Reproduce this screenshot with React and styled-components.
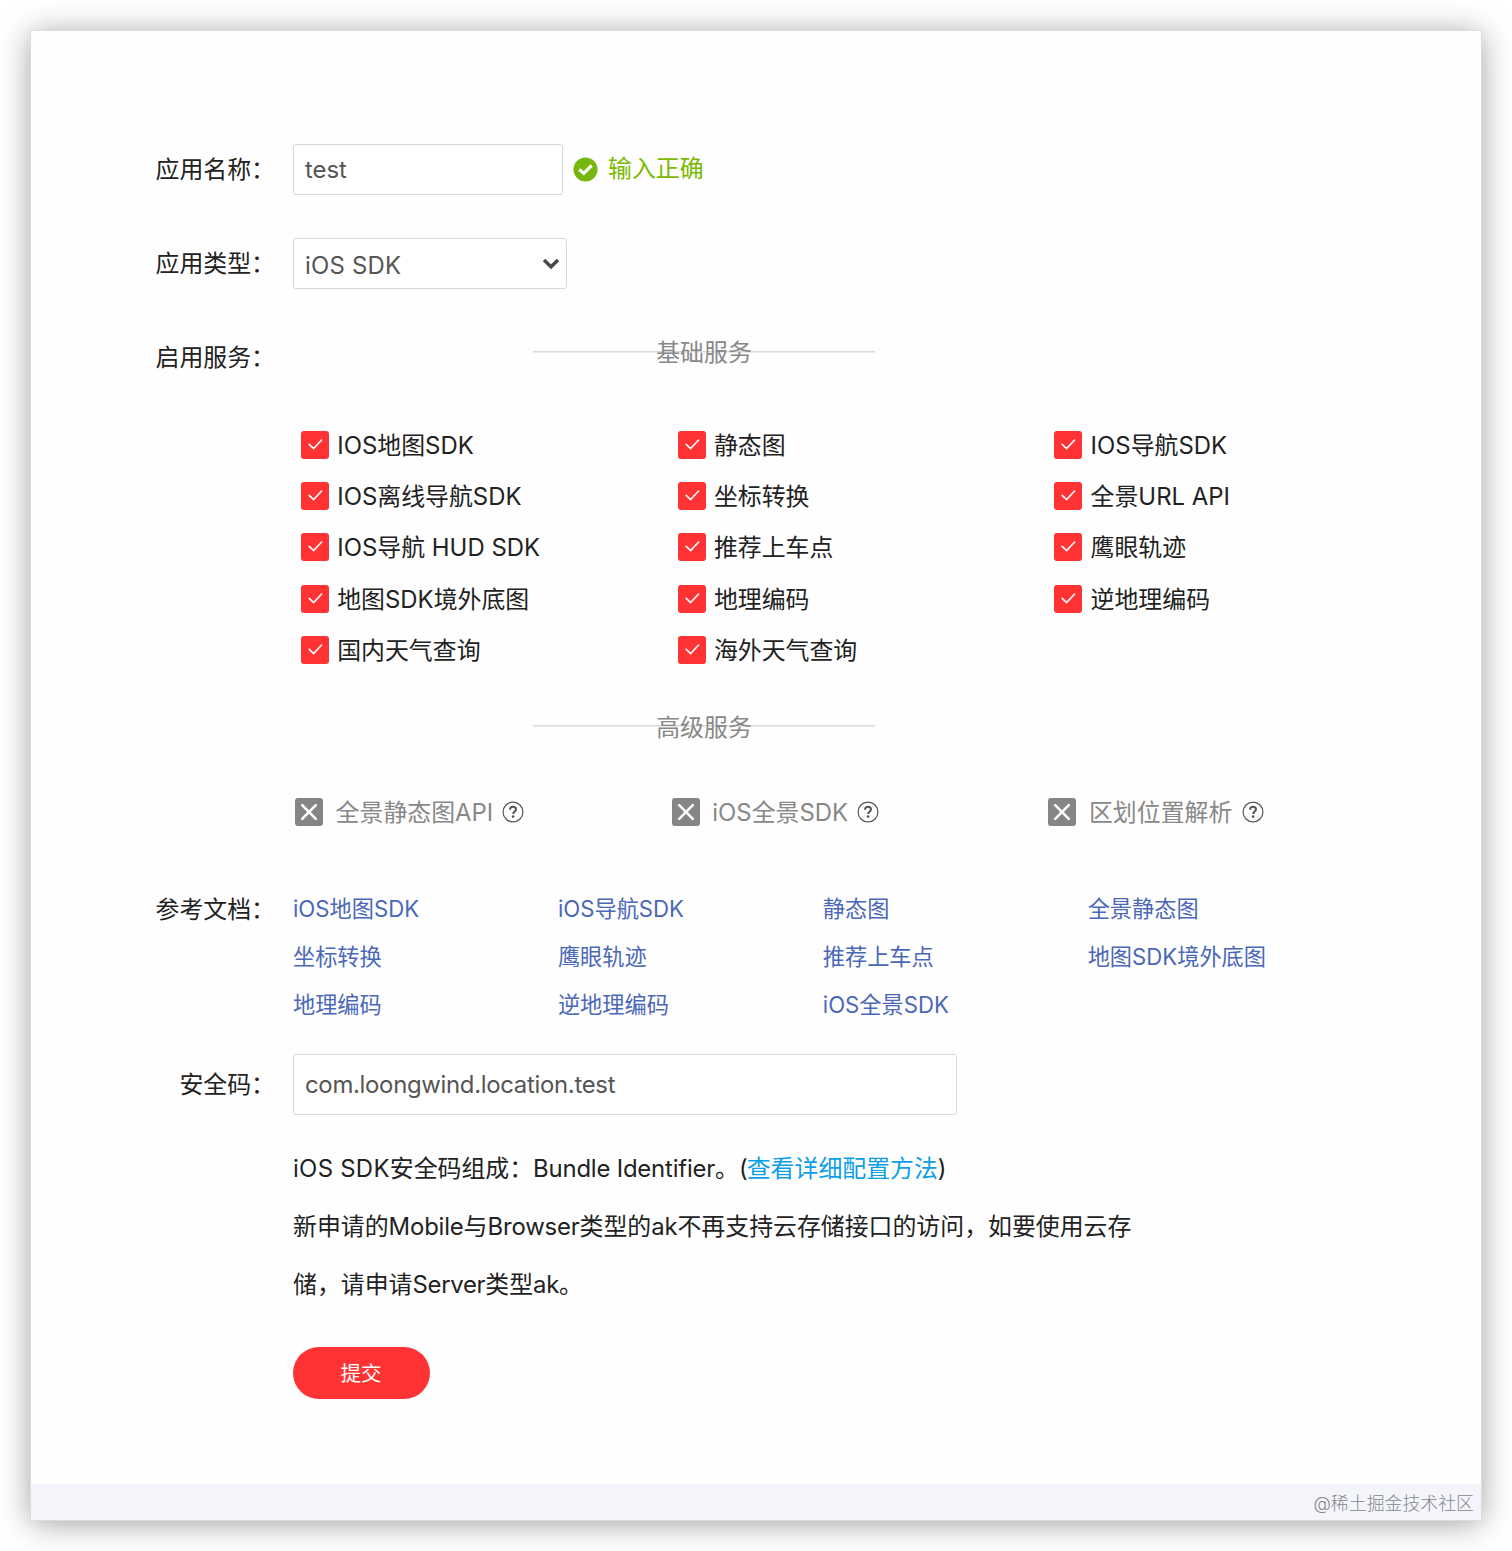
import React from 'react';
import styled, { createGlobalStyle } from 'styled-components';

const GlobalStyle = createGlobalStyle`
  * { box-sizing: border-box; }
  body {
    margin: 0;
    background: #fff;
    font-family: Inter, "Noto Sans CJK SC", sans-serif;
    font-size: 23.9px;
    color: #222;
  }
`;

const Page = styled.div`
  height: 1551px;
  padding: 31px 31px 31px;
  overflow: hidden;
`;

const Card = styled.main`
  display: flex;
  flex-direction: column;
  justify-content: space-between;
  height: 1489px;
  background: #fefefe;
  box-shadow: 0 0 0 1px #dcdcdc, 0 3px 30px rgba(0, 0, 0, 0.39);
`;

const Form = styled.form`
  display: flex;
  flex-direction: column;
  padding-top: 113px;
`;

const Row = styled.div`
  display: grid;
  grid-template-columns: 244px 1fr;
  column-gap: 18px;
  margin-top: ${(p) => p.$gap || 0}px;
`;

const Label = styled.label`
  height: ${(p) => p.$h}px;
  line-height: ${(p) => p.$h}px;
  text-align: right;
  white-space: nowrap;
`;

const Latin = styled.span`
  letter-spacing: ${(p) => p.$track || 0}em;
`;

const Field = styled.div`
  display: flex;
  align-items: center;
`;

const Input = styled.input`
  width: ${(p) => p.$w}px;
  height: ${(p) => p.$h}px;
  padding: 0 11px;
  border: 1.5px solid #d3d8d9;
  border-radius: 3px;
  outline: 0;
  background: #fff;
  color: #555;
  font: inherit;
  letter-spacing: ${(p) => p.$track || 0}em;
`;

const SelectBox = styled.div`
  display: flex;
  align-items: center;
  justify-content: space-between;
  width: 274px;
  height: 51px;
  padding: 3px 6px 0 11px;
  border: 1.5px solid #d3d8d9;
  border-radius: 3px;
  background: #fff;
  color: #555;
  line-height: 31px;

  svg { margin-top: -2px; }
`;

const Valid = styled.span`
  display: flex;
  align-items: center;
  gap: 10px;
  margin-left: 10px;
  color: #7ab900;
  line-height: 48px;
`;

const ValidText = styled.span`
  margin-top: -2px;
`;

const Heading = styled.h3`
  width: 342px;
  height: 38px;
  margin: ${(p) => p.$gap || 0}px 0 0 240px;
  background: linear-gradient(#d9d9d9, #d9d9d9) 0 18px / 100% 1.5px no-repeat;
  color: #888;
  font-size: inherit;
  font-weight: 400;
  line-height: ${(p) => p.$line || 40}px;
  text-align: center;
`;

const Services = styled.div`
  display: grid;
  grid-template-columns: repeat(3, 376.7px);
  grid-auto-rows: ${(p) => p.$row}px;
  align-items: center;
  margin-top: ${(p) => p.$gap}px;
  padding-left: ${(p) => p.$indent}px;
`;

const Service = styled.div`
  display: flex;
  align-items: center;
  gap: ${(p) => (p.$locked ? 12.6 : 8.2)}px;
  color: ${(p) => (p.$locked ? '#888' : '#222')};
  line-height: 28px;
  white-space: nowrap;
`;

const ServiceName = styled.span`
  padding-top: 2px;
`;

const Box = styled.span`
  display: grid;
  place-items: center;
  width: 28px;
  height: 28px;
  border-radius: 3px;
  background: ${(p) => (p.$locked ? '#858585' : '#ff3333')};
`;

const Help = styled.span`
  display: flex;
  margin-left: -3.4px;
`;

const Docs = styled.div`
  display: grid;
  grid-template-columns: repeat(4, 264.9px);
  grid-auto-rows: 48px;
  line-height: 48px;
  font-size: 22.2px;
`;

const DocLink = styled.a`
  color: #4b68b8;
  white-space: nowrap;
`;

const Note = styled.p`
  margin: 0;
  line-height: 58.2px;
  white-space: nowrap;
`;

const NoteLink = styled.a`
  color: #0c9fe8;
`;

const Submit = styled.button`
  width: 137px;
  height: 52px;
  padding: 0 1px 2px 0;
  border: 0;
  border-radius: 26px;
  background: #ff3333;
  color: #fff;
  font: inherit;
  font-size: 20.6px;
`;

const Footer = styled.footer`
  display: flex;
  align-items: center;
  justify-content: flex-end;
  height: 36px;
  padding: 0 7px 0 0;
  background: #f4f5fb;
  color: #85868c;
  font-size: 17.9px;
  font-weight: 300;
`;

function Mixed({ text, track = 0 }) {
  return text.split(/([\x20-\x7e]+)/).filter(Boolean).map((part, i) =>
    /^[\x20-\x7e]/.test(part) ? <Latin key={i} $track={track}>{part}</Latin> : part
  );
}

const CheckIcon = () => (
  <svg width="16" height="16" viewBox="0 0 16 16" fill="none" stroke="#fff" strokeWidth="1.6" strokeLinecap="round">
    <path d="M2.2 7.4 6.6 11.6 14.6 3" />
  </svg>
);

const CrossIcon = () => (
  <svg width="18" height="18" viewBox="0 0 18 18" fill="none" stroke="#fff" strokeWidth="2.6" strokeLinecap="round">
    <path d="M2.2 2.2 15.8 15.8M15.8 2.2 2.2 15.8" />
  </svg>
);

const HelpIcon = () => (
  <svg width="22" height="22" viewBox="0 0 22 22" fill="none" stroke="#555">
    <circle cx="11" cy="11" r="9.9" strokeWidth="1.2" />
    <path d="M8 8.8C8 6.9 9.2 5.8 11 5.8s3 1.1 3 2.6c0 2-2.8 2.1-2.8 4.5" strokeWidth="2" />
    <circle cx="11.1" cy="15.6" r="1.3" fill="#555" stroke="none" />
  </svg>
);

const ValidIcon = () => (
  <svg width="25" height="25" viewBox="0 0 25 25">
    <circle cx="12.5" cy="12.5" r="12" fill="#76b60e" />
    <path d="M6.3 12.4 10.8 16.4 18.6 8.4" fill="none" stroke="#fff" strokeWidth="3.2" />
  </svg>
);

const ChevronIcon = () => (
  <svg width="18" height="12" viewBox="0 0 18 12" fill="none" stroke="#484848" strokeWidth="3.4">
    <path d="M2 2 9 8.8 16 2" />
  </svg>
);

const basic = [
  'IOS地图SDK', '静态图', 'IOS导航SDK',
  'IOS离线导航SDK', '坐标转换', '全景URL API',
  'IOS导航 HUD SDK', '推荐上车点', '鹰眼轨迹',
  '地图SDK境外底图', '地理编码', '逆地理编码',
  '国内天气查询', '海外天气查询',
];
const advanced = ['全景静态图API', 'iOS全景SDK', '区划位置解析'];
const docs = [
  'iOS地图SDK', 'iOS导航SDK', '静态图', '全景静态图',
  '坐标转换', '鹰眼轨迹', '推荐上车点', '地图SDK境外底图',
  '地理编码', '逆地理编码', 'iOS全景SDK',
];

export default function App() {
  return (
    <Page>
      <GlobalStyle />
      <Card>
        <Form onSubmit={(e) => e.preventDefault()}>
          <Row>
            <Label $h={51}>应用名称：</Label>
            <Field>
              <Input $w={270} $h={51} defaultValue="test" />
              <Valid><ValidIcon /><ValidText>输入正确</ValidText></Valid>
            </Field>
          </Row>
          <Row $gap={43}>
            <Label $h={51}>应用类型：</Label>
            <SelectBox><span><Mixed text="iOS SDK" track={0.01} /></span><ChevronIcon /></SelectBox>
          </Row>
          <Row $gap={44}>
            <Label $h={50}>启用服务：</Label>
            <div>
              <Heading>基础服务</Heading>
              <Services $row={51.3} $gap={48} $indent={8}>
                {basic.map((t) => (
                  <Service key={t}><Box><CheckIcon /></Box><ServiceName><Mixed text={t} track={0.001} /></ServiceName></Service>
                ))}
              </Services>
              <Heading $gap={31.5} $line={42}>高级服务</Heading>
              <Services $row={28} $gap={53} $indent={2}>
                {advanced.map((t) => (
                  <Service key={t} $locked>
                    <Box $locked><CrossIcon /></Box><ServiceName><Mixed text={t} /></ServiceName><Help><HelpIcon /></Help>
                  </Service>
                ))}
              </Services>
            </div>
          </Row>
          <Row $gap={59}>
            <Label $h={50}>参考文档：</Label>
            <Docs>{docs.map((t) => <DocLink key={t}><Mixed text={t} /></DocLink>)}</Docs>
          </Row>
          <Row $gap={25}>
            <Label $h={61}>安全码：</Label>
            <Field><Input $w={664} $h={61} $track={-0.0125} defaultValue="com.loongwind.location.test" /></Field>
          </Row>
          <Row $gap={25}>
            <span />
            <Note>
              <Mixed text="iOS SDK" track={0.012} />安全码组成：<Mixed text="Bundle Identifier" track={-0.008} />。<Mixed text="(" track={-0.04} /><NoteLink>查看详细配置方法</NoteLink>)<br />
              <Mixed text="新申请的Mobile与Browser类型的ak不再支持云存储接口的访问，如要使用云存" track={-0.007} /><br />
              <Mixed text="储，请申请Server类型ak。" track={-0.012} />
            </Note>
          </Row>
          <Row $gap={32}>
            <span />
            <Submit>提交</Submit>
          </Row>
        </Form>
        <Footer>@稀土掘金技术社区</Footer>
      </Card>
    </Page>
  );
}
